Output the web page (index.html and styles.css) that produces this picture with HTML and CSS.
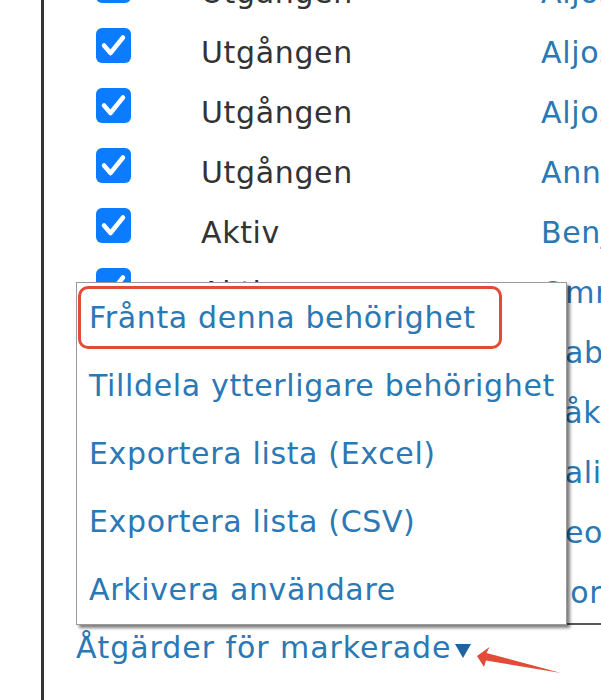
FILE: index.html
```html
<!DOCTYPE html>
<html lang="sv">
<head>
<meta charset="utf-8">
<title>Behörigheter</title>
<link rel="stylesheet" href="styles.css">
</head>
<body>
<div class="page">
  <div class="panel">
    <div class="table">
      <div class="row"><span class="cb"><svg viewBox="0 0 35 35"><polyline points="8,17.5 14.5,25 27,9.5"/></svg></span><span class="status">Utgången</span><a class="name">Aljoša Petrović</a></div>
      <div class="row"><span class="cb"><svg viewBox="0 0 35 35"><polyline points="8,17.5 14.5,25 27,9.5"/></svg></span><span class="status">Utgången</span><a class="name">Aljoša Jović</a></div>
      <div class="row"><span class="cb"><svg viewBox="0 0 35 35"><polyline points="8,17.5 14.5,25 27,9.5"/></svg></span><span class="status">Utgången</span><a class="name">Aljoša Marić</a></div>
      <div class="row"><span class="cb"><svg viewBox="0 0 35 35"><polyline points="8,17.5 14.5,25 27,9.5"/></svg></span><span class="status">Utgången</span><a class="name">Anna Lindberg</a></div>
      <div class="row"><span class="cb"><svg viewBox="0 0 35 35"><polyline points="8,17.5 14.5,25 27,9.5"/></svg></span><span class="status">Aktiv</span><a class="name">Benjamin Holm</a></div>
      <div class="row"><span class="cb"><svg viewBox="0 0 35 35"><polyline points="8,17.5 14.5,25 27,9.5"/></svg></span><span class="status">Aktiv</span><a class="name">Omran Said</a></div>
      <div class="row"><span class="cb"><svg viewBox="0 0 35 35"><polyline points="8,17.5 14.5,25 27,9.5"/></svg></span><span class="status">Aktiv</span><a class="name">Gabriel Ek</a></div>
      <div class="row"><span class="cb"><svg viewBox="0 0 35 35"><polyline points="8,17.5 14.5,25 27,9.5"/></svg></span><span class="status">Aktiv</span><a class="name">Håkan Berg</a></div>
      <div class="row"><span class="cb"><svg viewBox="0 0 35 35"><polyline points="8,17.5 14.5,25 27,9.5"/></svg></span><span class="status">Aktiv</span><a class="name">Dalia Nasser</a></div>
      <div class="row"><span class="cb"><svg viewBox="0 0 35 35"><polyline points="8,17.5 14.5,25 27,9.5"/></svg></span><span class="status">Aktiv</span><a class="name">Georg Nyström</a></div>
      <div class="row"><span class="cb"><svg viewBox="0 0 35 35"><polyline points="8,17.5 14.5,25 27,9.5"/></svg></span><span class="status">Aktiv</span><a class="name">Igor Petrov</a></div>
    </div>
    <div class="table-end"></div>
    <div class="actions"><a class="actions-link">Åtgärder för markerade<span class="caret"></span></a></div>
    <div class="menu">
      <a class="item item-first">Frånta denna behörighet<span class="highlight"></span></a>
      <a class="item">Tilldela ytterligare behörighet</a>
      <a class="item">Exportera lista (Excel)</a>
      <a class="item">Exportera lista (CSV)</a>
      <a class="item">Arkivera användare</a>
    </div>
  </div>
  <svg class="arrow" viewBox="0 0 601 700" width="601" height="700"><polygon points="477,656 489.5,647 486.5,653 561,673 486,660.5 484,667"/></svg>
</div>
</body>
</html>
```
FILE: styles.css
```css
html, body {
  margin: 0;
  padding: 0;
  background: #ffffff;
}
body {
  width: 601px;
  height: 700px;
  overflow: hidden;
  font-family: "DejaVu Sans", Verdana, sans-serif;
  font-size: 30px;
  letter-spacing: 0.65px;
  color: #333333;
}
.page {
  position: relative;
  width: 601px;
  height: 700px;
}
.panel {
  position: relative;
  display: flow-root;
  margin-left: 41px;
  height: 700px;
  border-left: 3px solid #333333;
}
.table {
  margin-top: -37px;
}
.row {
  display: grid;
  grid-template-columns: 105px 340px 1fr;
  align-items: start;
  padding-left: 52px;
  height: 60px;
  line-height: 60px;
  white-space: nowrap;
  overflow: hidden;
}
.cb {
  display: block;
  margin-top: 5px;
  width: 35px;
  height: 35px;
  border-radius: 6px;
  background: #0b7bff;
}
.cb svg {
  display: block;
  width: 35px;
  height: 35px;
}
.cb polyline {
  fill: none;
  stroke: #ffffff;
  stroke-width: 4.5;
  stroke-linecap: round;
  stroke-linejoin: round;
}
.row .status {
  color: #333333;
}
.name {
  color: #2a78b4;
  overflow: hidden;
}
.table-end {
  margin-left: 497px;
  height: 2px;
  background: #555555;
}
.actions {
  margin-top: 3px;
  padding-left: 32px;
  line-height: 40px;
  letter-spacing: 0.95px;
}
.actions-link {
  color: #2a78b4;
}
.caret {
  display: inline-block;
  margin-left: 3px;
  width: 0;
  height: 0;
  border-left: 8.5px solid transparent;
  border-right: 8.5px solid transparent;
  border-top: 14px solid #1f64a0;
  vertical-align: 0;
}
.menu {
  position: absolute;
  left: 32px;
  top: 282px;
  width: 491px;
  height: 343px;
  box-sizing: border-box;
  padding-top: 1px;
  background: #ffffff;
  border: 1px solid #9a9a9a;
  box-shadow: 3px 3px 3px rgba(0, 0, 0, 0.5);
}
.item {
  position: relative;
  display: block;
  height: 68px;
  line-height: 68px;
  padding-left: 12px;
  color: #2a78b4;
  white-space: nowrap;
}
.highlight {
  position: absolute;
  left: 1px;
  top: 2px;
  width: 424px;
  height: 63px;
  box-sizing: border-box;
  border: 3px solid #e24b38;
  border-radius: 10px;
}
.arrow {
  position: absolute;
  left: 0;
  top: 0;
  pointer-events: none;
}
.arrow polygon {
  fill: #e24b38;
}
```
